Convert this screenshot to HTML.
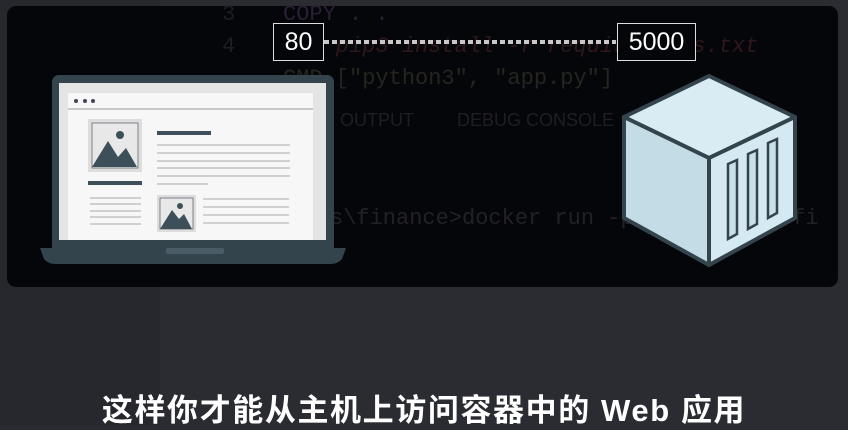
<!DOCTYPE html>
<html><head><meta charset="utf-8"><style>
html,body{margin:0;padding:0}
body{width:848px;height:425px;background:#2a2c32;position:relative;overflow:hidden;font-family:"Liberation Sans",sans-serif}
.left{position:absolute;left:0;top:0;width:160px;height:425px;background:#26282d}
.panel{position:absolute;left:7px;top:6px;width:831px;height:281px;background:#05060a;border-radius:9px}
.code{position:absolute;font-family:"Liberation Mono",monospace;font-size:22px;white-space:pre}
.cap{position:absolute;left:0;width:848px;top:385px;text-align:center;color:#fff;font-size:31px;font-weight:bold;font-family:"Liberation Sans","Noto Sans CJK SC",sans-serif;letter-spacing:1.6px}
.box{position:absolute;border:1.5px solid #ddd;background:#05060a;color:#fff;font-size:25px;text-align:center;line-height:36px;height:36px}
</style></head><body>
<div class="left"></div>
<div class="panel"></div>
<div class="code" style="left:222px;top:2px;color:#1e1e24">3</div>
<div class="code" style="left:222px;top:34px;color:#1e1e24">4</div>
<div class="code" style="left:283px;top:2px;color:#2c1f35">COPY . .</div>
<div class="code" style="left:283px;top:34px;color:#2e171b;font-style:italic">RUN pip3 install -r requirements.txt</div>
<div class="code" style="left:283px;top:66px;color:#25251f">CMD ["python3", "app.py"]</div>
<div class="code" style="left:340px;top:110px;color:#1f1f23;font-family:'Liberation Sans';font-size:18px">OUTPUT</div>
<div class="code" style="left:457px;top:110px;color:#1f1f23;font-family:'Liberation Sans';font-size:18px">DEBUG CONSOLE</div>
<div class="code" style="left:330px;top:206px;color:#222226">s\finance&gt;docker run -p         my-fi</div>
<div class="box" style="left:273px;top:23px;width:49px">80</div>
<div class="box" style="left:617px;top:23px;width:77px">5000</div>
<div style="position:absolute;left:324px;top:40px;width:292px;height:4px;background:repeating-linear-gradient(90deg,#c8c8c8 0 5px,transparent 5px 8px)"></div>
<svg width="848" height="425" style="position:absolute;left:0;top:0">
<rect x="52" y="75" width="282" height="178" rx="7" fill="#34444d"/>
<rect x="59" y="83" width="267" height="157" fill="#e4e4e4"/>
<rect x="68" y="93" width="245" height="147" fill="#f7f7f7"/>
<line x1="68" y1="109" x2="313" y2="109" stroke="#999" stroke-width="1"/>
<circle cx="76" cy="101" r="2" fill="#445"/><circle cx="85" cy="101" r="2" fill="#445"/><circle cx="93" cy="101" r="2" fill="#445"/>
<rect x="88" y="119" width="54" height="53" fill="#ddd"/>
<rect x="92" y="123" width="46" height="45" fill="#e8e8e8" stroke="#667" stroke-width="0.8"/>
<circle cx="120" cy="135" r="4" fill="#3d4f58"/>
<polygon points="92,167 108,141 118,157 126,148 137,167" fill="#3d4f58"/>
<rect x="157" y="131" width="54" height="4" fill="#3d4f58"/>
<g stroke="#aaa" stroke-width="1"><line x1="157" y1="145" x2="290" y2="145"/><line x1="157" y1="153" x2="290" y2="153"/><line x1="157" y1="161" x2="290" y2="161"/><line x1="157" y1="168" x2="290" y2="168"/><line x1="157" y1="176" x2="290" y2="176"/><line x1="157" y1="184" x2="208" y2="184"/>
<line x1="90" y1="198" x2="141" y2="198"/><line x1="90" y1="204" x2="141" y2="204"/><line x1="90" y1="211" x2="141" y2="211"/><line x1="90" y1="217" x2="141" y2="217"/><line x1="90" y1="224" x2="141" y2="224"/>
<line x1="203" y1="199" x2="289" y2="199"/><line x1="203" y1="207" x2="289" y2="207"/><line x1="203" y1="215" x2="289" y2="215"/><line x1="203" y1="223" x2="289" y2="223"/></g>
<rect x="88" y="181" width="54" height="4" fill="#3d4f58"/>
<rect x="157" y="195" width="39" height="37" fill="#ddd"/>
<rect x="160" y="198" width="33" height="31" fill="#e8e8e8" stroke="#667" stroke-width="0.8"/>
<circle cx="180" cy="206" r="3" fill="#3d4f58"/>
<polygon points="160,229 172,210 179,219 184,214 192,229" fill="#3d4f58"/>
<path d="M40 248 H346 L342 259 Q338 264 330 264 H56 Q48 264 44 259 Z" fill="#34444d"/>
<rect x="166" y="248" width="58" height="6" rx="2" fill="#4a5c66"/>
<polygon points="709,76 795,117 709,158 624,117" fill="#d9ecf3" stroke="#34444d" stroke-width="4" stroke-linejoin="round"/>
<polygon points="624,117 709,158 709,265 624,218" fill="#c4dce5" stroke="#34444d" stroke-width="4" stroke-linejoin="round"/>
<polygon points="709,158 795,117 795,218 709,265" fill="#d4e9f1" stroke="#34444d" stroke-width="4" stroke-linejoin="round"/>
<g fill="#c8e0e9" stroke="#34444d" stroke-width="2.5"><polygon points="728,164 737,160 737,234 728,239"/><polygon points="748,154 757,150 757,224 748,229"/><polygon points="768,143 777,139 777,213 768,218"/></g>
</svg>
<div class="cap">这样你才能从主机上访问容器中的 Web 应用</div>
</body></html>
